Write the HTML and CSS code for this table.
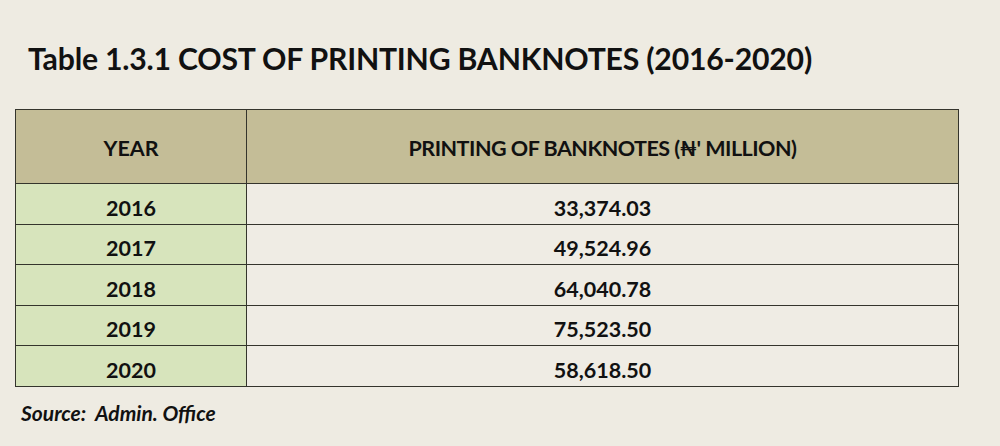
FILE: index.html
```html
<!DOCTYPE html>
<html>
<head>
<meta charset="utf-8">
<link rel="stylesheet" href="styles.css">
</head>
<body>
<div class="page">
  <h1 class="title">Table 1.3.1 COST OF PRINTING BANKNOTES (2016-2020)</h1>
  <table class="data">
    <thead>
      <tr><th class="year">YEAR</th><th class="val">PRINTING OF BANKNOTES (₦' MILLION)</th></tr>
    </thead>
    <tbody>
      <tr><td class="year">2016</td><td class="val">33,374.03</td></tr>
      <tr><td class="year">2017</td><td class="val">49,524.96</td></tr>
      <tr><td class="year">2018</td><td class="val">64,040.78</td></tr>
      <tr><td class="year">2019</td><td class="val">75,523.50</td></tr>
      <tr><td class="year">2020</td><td class="val">58,618.50</td></tr>
    </tbody>
  </table>
  <p class="source">Source:&nbsp; Admin. Office</p>
</div>
</body>
</html>
```
FILE: styles.css
```css
html, body {
  margin: 0;
  padding: 0;
  background: #eeebe2;
}
.page {
  width: 1000px;
  height: 446px;
  padding: 40px 0 0 15px;
  box-sizing: border-box;
  font-family: Lato, "Liberation Sans", sans-serif;
  color: #111;
}
.title {
  margin: 0 0 0 13px;
  font-size: 30.2px;
  line-height: 36px;
  font-weight: 700;
  letter-spacing: -0.2px;
}
.data {
  margin-top: 33px;
  border-collapse: collapse;
  width: 944px;
  font-size: 21.5px;
  font-weight: 700;
}
.data th, .data td {
  border: 1.5px solid #34342c;
  text-align: center;
  padding: 0;
}
.data th {
  background: #c4bd97;
  height: 74px;
  padding-top: 3px;
  box-sizing: border-box;
  letter-spacing: -0.5px;
}
.data th.year {
  width: 231px;
  letter-spacing: 0;
}
.data td {
  height: 40.5px;
  padding-top: 8px;
  box-sizing: border-box;
}
.data td.year {
  background: #d7e4bc;
}
.data td.val {
  background: #efece4;
}
.source {
  margin: 13px 0 0 6px;
  font-size: 21px;
  font-weight: 700;
  font-style: italic;
}
```
